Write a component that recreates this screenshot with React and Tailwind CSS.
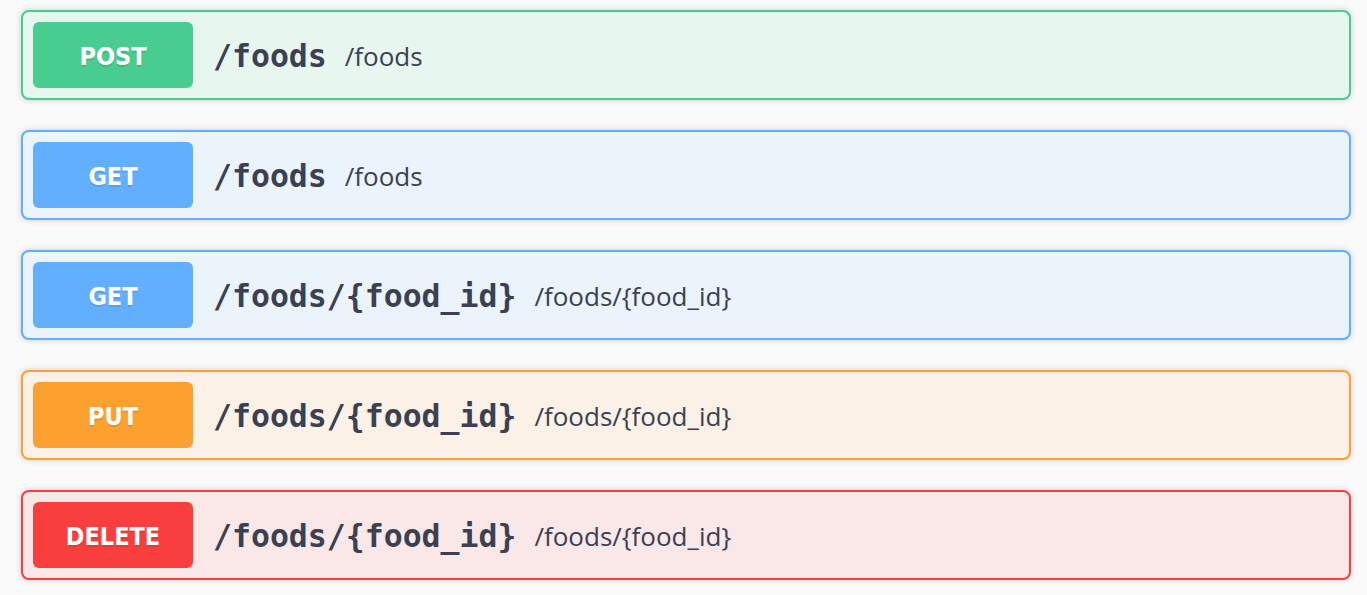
import React from "react";

const ops = [
  { method: "POST", path: "/foods", box: "border-[#49cc90] bg-[#e8f6f0]", badge: "bg-[#49cc90]" },
  { method: "GET", path: "/foods", box: "border-[#61affe] bg-[#ebf3fb]", badge: "bg-[#61affe]" },
  { method: "GET", path: "/foods/{food_id}", box: "border-[#61affe] bg-[#ebf3fb]", badge: "bg-[#61affe]" },
  { method: "PUT", path: "/foods/{food_id}", box: "border-[#fca130] bg-[#fbf1e6]", badge: "bg-[#fca130]" },
  { method: "DELETE", path: "/foods/{food_id}", box: "border-[#f93e3e] bg-[#fae7e7]", badge: "bg-[#f93e3e]" },
];

const OpBlock = ({ op }) => (
  <div className={`flex items-center h-[90px] rounded-[8px] border-2 px-[10px] shadow-[0_0_6px_rgba(0,0,0,0.19)] ${op.box}`}>
    <div
      className={`w-[160px] h-[66px] pt-[4px] rounded-[6px] flex items-center justify-center text-white font-bold text-[25px] [text-shadow:0_2px_0_rgba(0,0,0,0.1)] ${op.badge}`}
      style={{ fontFamily: '"DejaVu Sans", sans-serif', fontStretch: "condensed" }}
    >
      {op.method}
    </div>
    <span
      className="ml-[20px] mt-[4px] text-[31.5px] font-bold text-[#3b4151]"
      style={{ fontFamily: '"DejaVu Sans Mono", monospace' }}
    >
      {op.path}
    </span>
    <span
      className="ml-[18px] mt-[2px] text-[26px] text-[#3b4151]"
      style={{ fontFamily: '"Open Sans", sans-serif' }}
    >
      {op.path}
    </span>
  </div>
);

export default function App() {
  return (
    <div className="min-h-[595px] bg-[#fafafa] pt-[10px] pl-[21px]">
      <div className="w-[1330px] flex flex-col gap-[30px]">
        {ops.map((op, i) => (
          <OpBlock key={i} op={op} />
        ))}
      </div>
    </div>
  );
}
